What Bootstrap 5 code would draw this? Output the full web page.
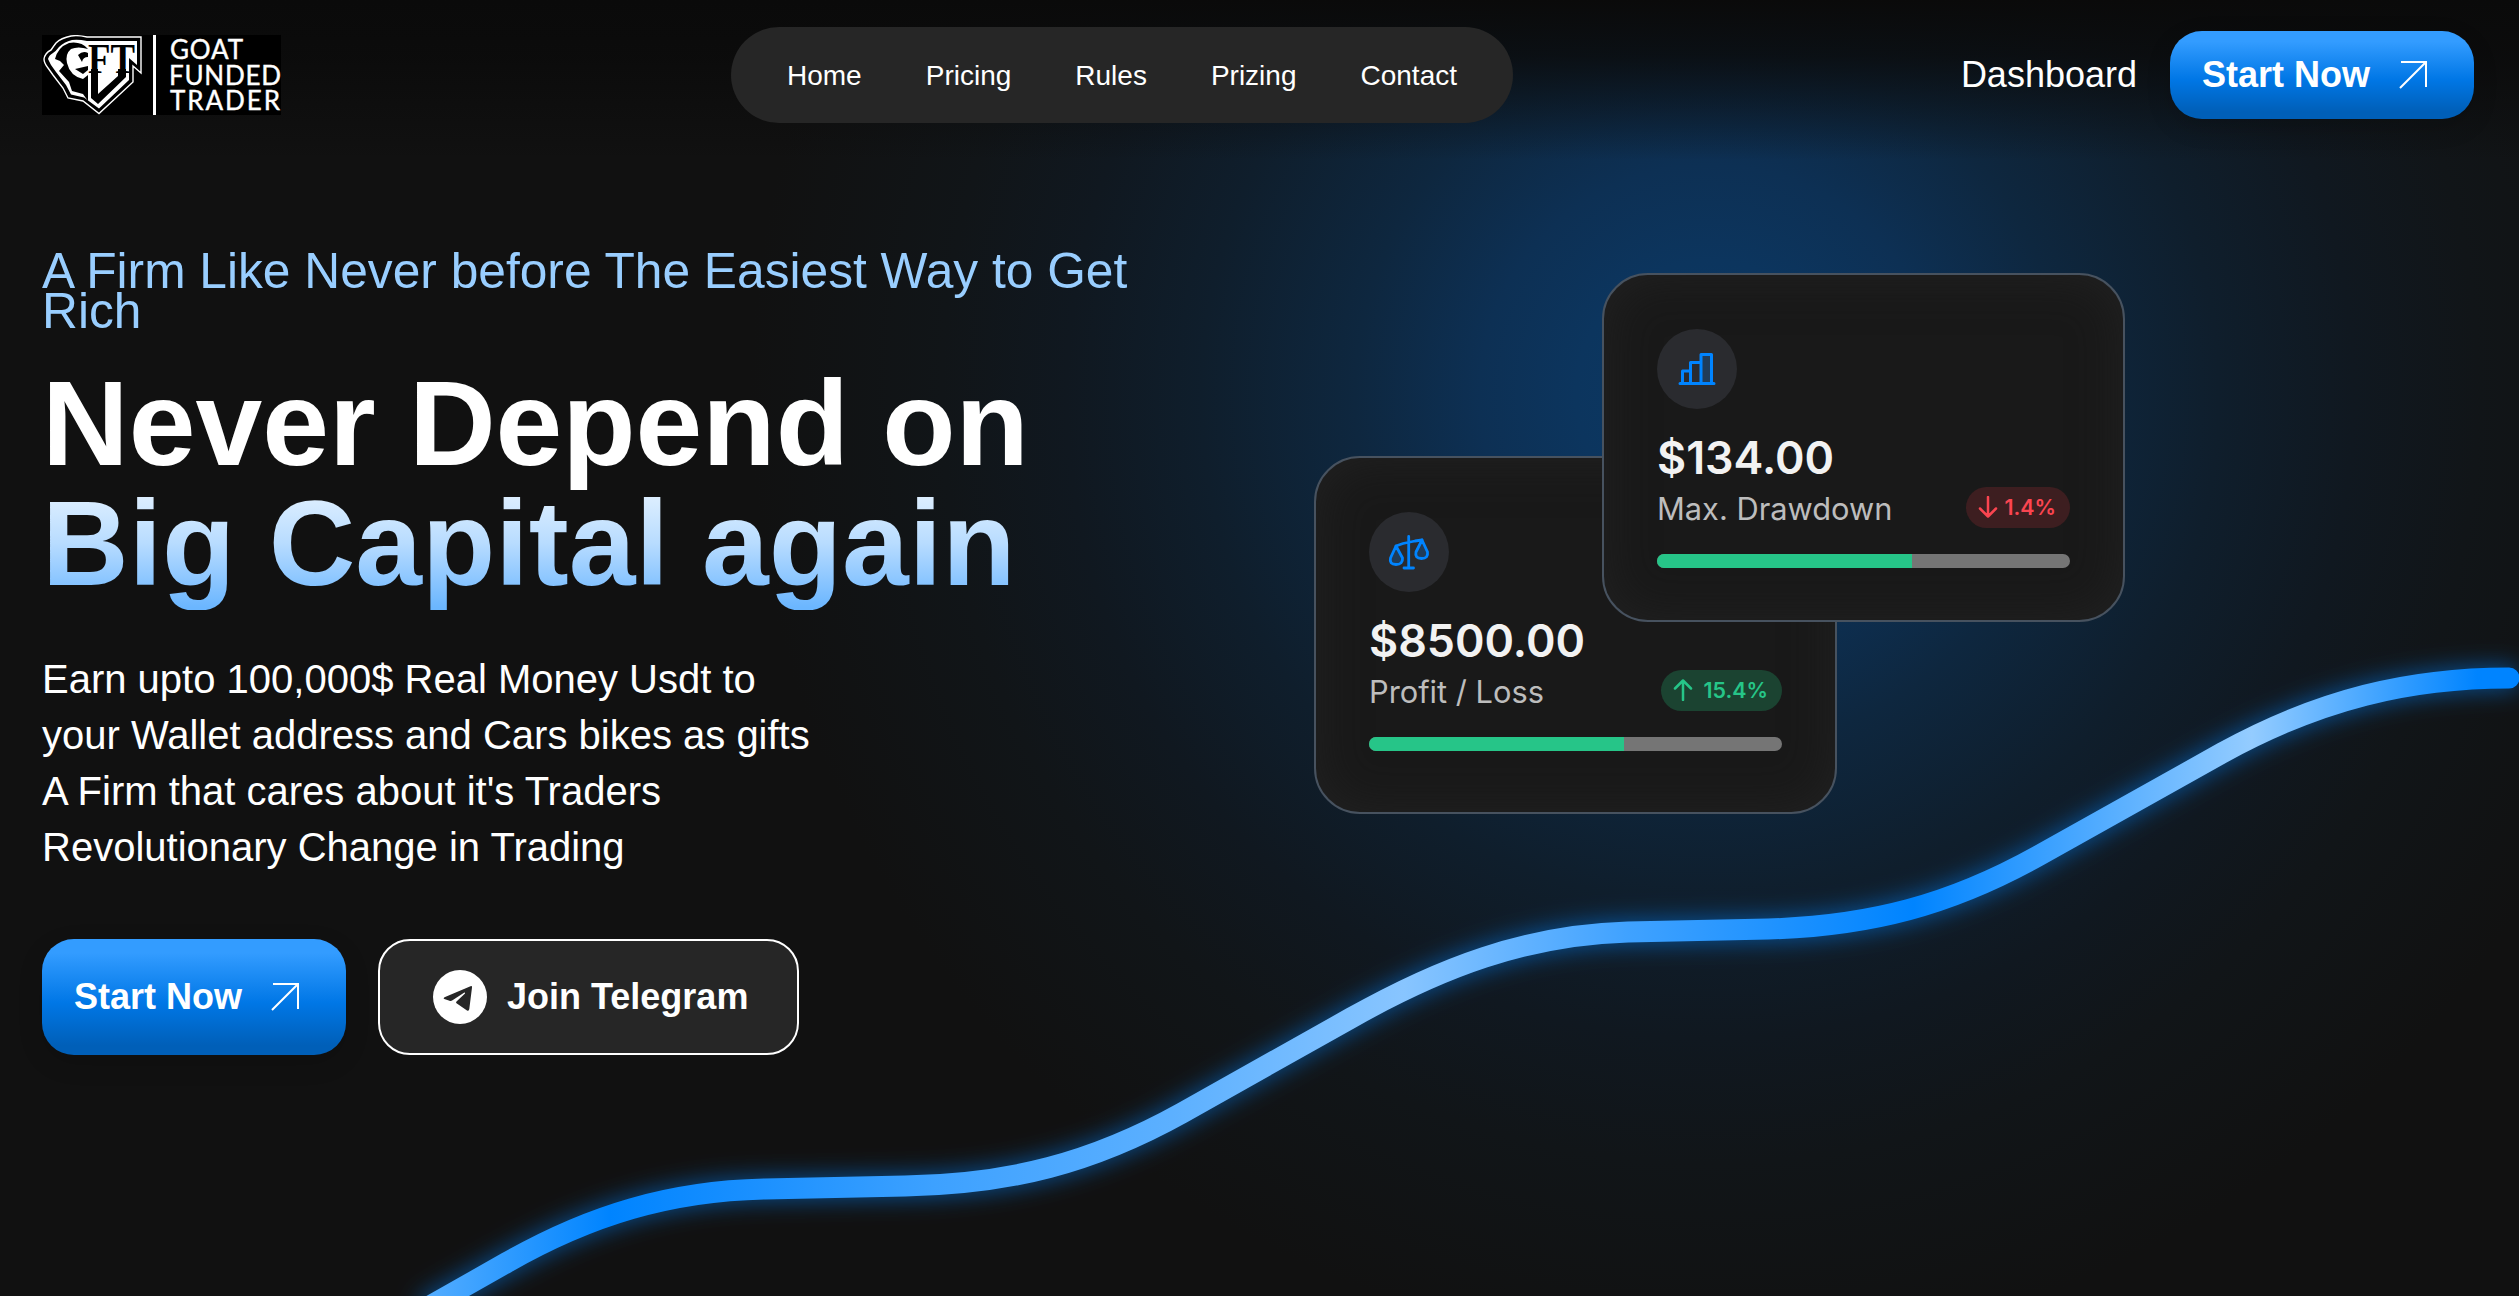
<!DOCTYPE html>
<html lang="en">
<head>
<meta charset="utf-8">
<meta name="viewport" content="width=device-width, initial-scale=1">
<title>Goat Funded Trader</title>
<link href="https://cdn.jsdelivr.net/npm/bootstrap@5.3.0/dist/css/bootstrap.min.css" rel="stylesheet">
<style>
body{background:#111;color:#fff;font-family:"Liberation Sans",Arial,sans-serif;overflow:hidden}
.page{height:1296px;isolation:isolate;background:radial-gradient(circle 960px at 1710px 395px,#0a3964 0%,#0c355e 14%,#0d3054 24%,#0e273f 37%,#0f1e2c 53%,#101820 67%,#111518 80%,#111 100%)}
.page::before{content:"";position:absolute;inset:0 0 auto;height:160px;background:linear-gradient(#0a0a0a,rgba(10,10,10,.8) 35%,rgba(10,10,10,0));z-index:-1}
.topbar{padding:27px 45px 0 42px;height:123px}
.side-l{flex:0 0 689px}
.pill{width:782px;height:96px;border-radius:48px;background:#262626;gap:64px;font-size:28px}
.pill .nav-link{color:#fff;padding:2px 1px 0 0;margin-right:-1px}
.account{gap:33px;padding-top:4px}
.dash{font-size:36px;color:#fff;text-decoration:none;line-height:54px;padding-top:17px}
.btn-gft{width:304px;border:0;border-radius:32px;padding:0 47px 0 32px;font-size:36px;font-weight:700;color:#fff;background:linear-gradient(#339cff 12%,#0077e6 55%,#005fb8 92%);box-shadow:0 8px 24px rgba(0,0,0,.15);white-space:nowrap}
.btn-gft:hover{color:#fff}
.h88{height:88px}.h116{height:116px}
.cta{gap:32px}
.btn-tg{width:421px;height:116px;border:2px solid #fff;border-radius:32px;background:#262626;color:#fff;font-size:36px;font-weight:700;gap:20px;padding:0 0 0 53px}
.hero{padding:128px 0 0 42px;width:1180px}
.kicker{font-size:49.7px;line-height:40px;color:#99ceff;margin:0 0 32px}
.headline{font-size:120px;line-height:120px;font-weight:700;margin:0 0 48px}
.fade-txt{background:linear-gradient(#f0f8ff 0%,#dceeff 16%,#b8dcff 50%,#6bb6ff 98%);-webkit-background-clip:text;background-clip:text;color:transparent}
.copy{font-size:40px;line-height:56px;margin:0 0 64px}
.curve{left:0;top:0;pointer-events:none}
.stat{width:523px;padding:53.5px 53px 0;border:2px solid #47525f;border-radius:46px;background:#191919;box-shadow:inset 0 0 50px rgba(36,36,36,.8);font-family:Inter,sans-serif}
.stat-a{left:1314px;top:456px;height:358px}
.stat-b{left:1602px;top:273px;height:349px}
.disc{width:80px;height:80px;border-radius:50%;background:#2a2b2f}
.disc svg{display:block}
.amount{font-size:44.8px;font-weight:600;line-height:54px;color:#f2f2f2;margin-top:22px}
.lbl{font-size:30.8px;line-height:43px;color:#bdbdbd}
.meta{margin-top:2px;height:41px}
.chip{height:41px;border-radius:21px;padding:0 14px 0 12px;font-size:21.4px;font-weight:600;white-space:nowrap}
.chip-r{background:#3d1e20;color:#fa4550;width:104px}
.chip-g{background:#1b4331;color:#26c588;width:121px}
.gauge{height:14px;border-radius:7px;background:#757575;margin-top:26px;overflow:hidden}
.gauge>div{background:#26c588;height:100%}
</style>
<script src="https://cdn.jsdelivr.net/npm/bootstrap@5.3.0/dist/js/bootstrap.bundle.min.js"></script>
</head>
<body>
<div class="page position-relative overflow-hidden">
<svg class="curve position-absolute" width="2519" height="1296" viewBox="0 0 2519 1296" fill="none">
<defs>
<linearGradient id="wave" gradientUnits="userSpaceOnUse" x1="430" y1="0" x2="2519" y2="0">
<stop offset="0" stop-color="#52acff"/><stop offset=".086" stop-color="#0084ff"/><stop offset=".154" stop-color="#1a90ff"/><stop offset=".241" stop-color="#3da1ff"/><stop offset=".355" stop-color="#5cb0ff"/><stop offset=".466" stop-color="#88c5ff"/><stop offset=".573" stop-color="#40a2ff"/><stop offset=".71" stop-color="#0084ff"/><stop offset=".872" stop-color="#94ccff"/><stop offset=".98" stop-color="#0084ff"/>
</linearGradient>
<filter id="glow" filterUnits="userSpaceOnUse" x="350" y="600" width="2200" height="760"><feGaussianBlur stdDeviation="12"/></filter>
</defs>
<path filter="url(#glow)" stroke="#0084ff" stroke-opacity=".6" stroke-width="21" stroke-linecap="round" d="M430 1306L506 1263C590 1215 670 1191 765 1189L905 1186C1010 1184 1092 1163 1182 1113L1351 1018C1440 968 1525 935 1628 932L1768 929C1870 926 1950 905 2038 856L2222 753C2320 699 2410 678 2509 678"/>
<path stroke="url(#wave)" stroke-width="21" stroke-linecap="round" d="M430 1306L506 1263C590 1215 670 1191 765 1189L905 1186C1010 1184 1092 1163 1182 1113L1351 1018C1440 968 1525 935 1628 932L1768 929C1870 926 1950 905 2038 856L2222 753C2320 699 2410 678 2509 678"/>
</svg>
<header class="topbar d-flex position-relative">
<div class="side-l pt-2">
<svg width="239" height="80" viewBox="0 0 239 80">
<rect width="239" height="80" fill="#000"/>
<path d="M99 2H45Q36 0 29 1Q19 3 14 8Q11 12 9 15Q3 18 2 24Q2 28 6 33L11 40 21 53 26 63 41 66 57 78.500 91 47V31L99 38Z" fill="#000" stroke="#fff" stroke-width="1.400"/>
<path d="M95 6H45Q36 4 30 5Q22 7 17 12Q14 16 11 18Q7 20 6 24L9 30 14 37 24 50 29 59.500 42 62.500 57 73.500 87 45V23L95 30Z" fill="#fff"/>
<path d="M13 24Q16 12 27 8Q39 6 46 14Q36 11 29 14Q23 19 25 28Q28 41 41 44L46 40V66L41 59 30 56 27 47 17 36 22 30 18 26Z" fill="#000"/>
<path d="M36 20Q41 15 46 18V22Q41 22 40 27ZM33 34L46 31V35L41 39Z" fill="#000"/>
<text x="46" y="38" font-family="Liberation Serif,serif" font-weight="700" font-size="43" textLength="47" lengthAdjust="spacingAndGlyphs">FT</text>
<path d="M49 34H56V69L49 63ZM76 34H84V42L56 69V59L76 41Z" fill="#000"/>
<path d="M111 0h3V80h-3Z" fill="#fff"/>
<g fill="#fff" stroke="#fff" stroke-width=".4" font-family="Lato,sans-serif" font-size="26">
<text x="128" y="23.500" textLength="73">GOAT</text><text x="127" y="49.500" textLength="112">FUNDED</text><text x="128" y="75" textLength="110">TRADER</text></g>
</svg>
</div>
<nav class="pill nav d-flex align-items-center justify-content-center flex-nowrap">
<a class="nav-link" href="#">Home</a><a class="nav-link" href="#">Pricing</a><a class="nav-link" href="#">Rules</a><a class="nav-link" href="#">Prizing</a><a class="nav-link" href="#">Contact</a>
</nav>
<div class="account d-flex ms-auto">
<a class="dash" href="#">Dashboard</a>
<a class="btn btn-gft h88 d-flex align-items-center justify-content-between" href="#">Start Now<svg width="28" height="28" viewBox="0 0 28 28" fill="none" stroke="#fff" stroke-width="2"><path d="M1 27L27 1M2 1H27V26"/></svg></a>
</div>
</header>
<main class="hero position-relative">
<p class="kicker">A Firm Like Never before The Easiest Way to Get Rich</p>
<h1 class="headline">Never Depend on<br><span class="fade-txt">Big Capital again</span></h1>
<p class="copy">Earn upto 100,000$ Real Money Usdt to<br>your Wallet address and Cars bikes as gifts<br>A Firm that cares about it's Traders<br>Revolutionary Change in Trading</p>
<div class="cta d-flex">
<a class="btn btn-gft h116 d-flex align-items-center justify-content-between" href="#">Start Now<svg width="28" height="28" viewBox="0 0 28 28" fill="none" stroke="#fff" stroke-width="2"><path d="M1 27L27 1M2 1H27V26"/></svg></a>
<a class="btn btn-tg d-flex align-items-center" href="#"><svg width="54" height="54" viewBox="0 0 54 54"><circle cx="27" cy="27" r="27" fill="#fff"/><path fill="#262626" d="M37.500 16.200Q39.300 15.600 39 17.500L36.300 39Q36 41.500 34 40.500L23.500 33.300Q22.500 32.500 23.500 31.500L32 23.500Q32.300 22.200 31 22.700L19.500 30.300Q18 31.200 16.500 30.700L11.300 29Q9.700 28.200 11.500 27.200Z"/></svg>Join Telegram</a>
</div>
</main>
<section class="stat stat-a position-absolute">
<div class="disc"><svg width="80" height="80" viewBox="0 0 80 80" fill="none" stroke="#0084ff" stroke-width="2.800" stroke-linecap="round" stroke-linejoin="round"><path d="M39.700 24.500V56M35 56H44.500M27 34L34 31.500 46 29 53 28"/><path d="M27 34L21.500 46Q20 52.500 27 52.500T33.500 46ZM53 28L47 40Q45.500 46.500 52.500 46.500T58.500 40Z" fill="#0084ff" fill-opacity=".2"/></svg></div>
<div class="amount">$8500.00</div>
<div class="meta d-flex justify-content-between"><div class="lbl">Profit / Loss</div>
<div class="chip chip-g d-flex align-items-center justify-content-between"><svg width="20" height="22" viewBox="0 0 20 22" fill="none" stroke="currentColor" stroke-width="2.500" stroke-linecap="round" stroke-linejoin="round"><path d="M10 21V2M2 9.500L10 1.500 18 9.500"/></svg>15.4%</div></div>
<div class="gauge"><div style="width:61.700%"></div></div>
</section>
<section class="stat stat-b position-absolute">
<div class="disc"><svg width="80" height="80" viewBox="0 0 80 80" fill="none" stroke="#0084ff" stroke-width="3" stroke-linecap="round" stroke-linejoin="round"><path d="M44 54V25.500H54.500V54" fill="#0084ff" fill-opacity=".2"/><path d="M23 54.500H57M25.500 54V42H33.500M33.500 54V33.500H43"/></svg></div>
<div class="amount">$134.00</div>
<div class="meta d-flex justify-content-between"><div class="lbl">Max. Drawdown</div>
<div class="chip chip-r d-flex align-items-center justify-content-between"><svg width="20" height="22" viewBox="0 0 20 22" fill="none" stroke="currentColor" stroke-width="2.500" stroke-linecap="round" stroke-linejoin="round"><path d="M10 1V20M2 12.500L10 20.500 18 12.500"/></svg>1.4%</div></div>
<div class="gauge"><div style="width:61.700%"></div></div>
</section>
</div>
</body>
</html>
